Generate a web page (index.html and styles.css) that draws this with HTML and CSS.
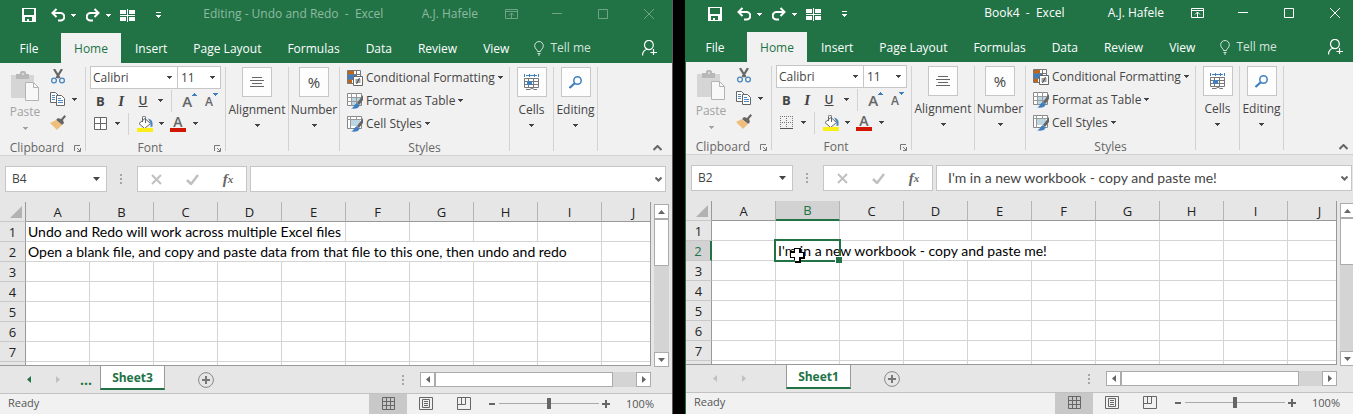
FILE: index.html
```html
<!DOCTYPE html>
<html lang="en">
<head>
<meta charset="utf-8">
<title>Excel workbooks</title>
<link rel="stylesheet" href="styles.css">
</head>
<body>
<svg class="sprite" aria-hidden="true">
  <symbol id="i-save" viewBox="0 0 14 14"><path fill="currentColor" fill-rule="evenodd" d="M0 0h14v14H0zM2 1v6h10V1zM3 9v4h2v-2h2v2h3V9z"/></symbol>
  <symbol id="i-undo" viewBox="0 0 14 14"><path fill="none" stroke="currentColor" stroke-width="2" d="M5.500 1L1.500 5l4 4M2 5h7a3.600 3.600 0 0 1 1 7.500H7"/></symbol>
  <symbol id="i-redo" viewBox="0 0 14 14"><path fill="none" stroke="currentColor" stroke-width="2" d="M8.500 1l4 4-4 4M12 5H5a3.600 3.600 0 0 0-1 7.500h3"/></symbol>
  <symbol id="i-panes" viewBox="0 0 15 13"><path fill="currentColor" shape-rendering="crispEdges" d="M0 1h6v4H0zM9 1h6v4H9zM0 8h6v4H0zM9 8h6v4H9zM0 6h15v1H0zM7 0h1v13H7z"/></symbol>
  <symbol id="i-more" viewBox="0 0 5 6"><path fill="currentColor" shape-rendering="crispEdges" d="M0 0h5v1H0zM0 3h5v1H0zM1 4h3v1H1zM2 5h1v1H2z"/></symbol>
  <symbol id="i-down" viewBox="0 0 5 3"><path fill="currentColor" shape-rendering="crispEdges" d="M0 0h5v1H0zM1 1h3v1H1zM2 2h1v1H2z"/></symbol>
  <symbol id="i-up" viewBox="0 0 5 3"><path fill="currentColor" shape-rendering="crispEdges" d="M0 2h5v1H0zM1 1h3v1H1zM2 0h1v1H2z"/></symbol>
  <symbol id="i-ribbon" viewBox="0 0 13 10"><path fill="none" stroke="currentColor" d="M.5.5h12v9H.5zM.5 2.500h12M6.500 9V4M4 6.500L6.500 4 9 6.500"/></symbol>
  <symbol id="i-min" viewBox="0 0 10 10"><path fill="currentColor" d="M0 4h10v1H0z"/></symbol>
  <symbol id="i-max" viewBox="0 0 10 10"><path fill="none" stroke="currentColor" d="M.5.5h9v9h-9z"/></symbol>
  <symbol id="i-close" viewBox="0 0 10 10"><path fill="none" stroke="currentColor" d="M0 0l10 10M10 0L0 10"/></symbol>
  <symbol id="i-bulb" viewBox="0 0 10 15"><path fill="none" stroke="currentColor" d="M3.500 10.500c0-2-2.800-2.500-2.800-5.700a4.300 4.300 0 0 1 8.600 0c0 3.200-2.800 3.700-2.800 5.700zM3.500 12.500h3M4 14h2"/></symbol>
  <symbol id="i-person" viewBox="0 0 15 16"><path fill="none" stroke="currentColor" stroke-width="1.200" d="M2.500 5a4.400 4.600 0 1 0 8.800 0a4.400 4.600 0 1 0-8.800 0M.5 15.500c0-4 2-5.500 4.500-6.500M11.500 9v6M8.500 12.500H15"/></symbol>
  <symbol id="i-paste" viewBox="0 0 28 30"><path fill="#d5d5d5" d="M0 4h23v7h-9v16H0z"/><path fill="#b8b8b8" d="M5 3h4V1.500A2 2 0 0 1 11 0h2a2 2 0 0 1 2 1.500V3h3v5H5z"/><path fill="#d9d9d9" d="M11 2h2v2h-2z"/><path fill="#f8f8f8" stroke="#b3b3b3" d="M14.500 11.500h8l5 5v13h-13z"/><path fill="none" stroke="#b3b3b3" d="M22.500 11.500v5h5"/></symbol>
  <symbol id="i-cut" viewBox="0 0 14 15"><path stroke="#666" stroke-width="2.200" fill="none" d="M3 0l5.500 9M11 0L5.500 9"/><circle cx="3" cy="11.500" r="2.400" fill="none" stroke="#4a86c0" stroke-width="1.300"/><circle cx="11" cy="11.500" r="2.400" fill="none" stroke="#4a86c0" stroke-width="1.300"/></symbol>
  <symbol id="i-copy" viewBox="0 0 15 14"><path fill="#fff" stroke="#666" d="M.5.5h5l3 3v7h-8z"/><path fill="#fff" stroke="#666" d="M6.500 3.500h5l3 3v7h-8z"/><path stroke="#4a86c0" d="M2 3.500h3M2 5.500h3M2 7.500h3M8 6.500h3M8 8.500h5M8 10.500h5"/></symbol>
  <symbol id="i-brush" viewBox="0 0 16 15"><path fill="#666" d="M8 3l3 1 3.500-4L16 1.500 13 5l1 3-2 2-6-5z"/><path fill="#f0be7c" d="M0 8l6-3 6 5-5 5z"/></symbol>
  <symbol id="i-borders-all" viewBox="0 0 14 14"><path fill="#fff" stroke="#666" d="M.5.5h12v12H.5zM6.500 0v13M0 6.500h13"/></symbol>
  <symbol id="i-borders-none" viewBox="0 0 14 14"><path fill="none" stroke="#777" stroke-dasharray="1 1" d="M0 .5h13M0 6.500h13M.5 0v13M6.500 0v13M12.500 0v13"/><path stroke="#555" d="M0 12.500h13"/></symbol>
  <symbol id="i-fill" viewBox="0 0 16 16"><path fill="#fff" stroke="#666" d="M8 2.500l5.500 5-6 5-5.500-5z"/><path fill="none" stroke="#666" d="M5.500 6V1.500a1.500 1.500 0 0 1 3 0V7"/><path fill="#4a86c0" d="M11 2.500c4 1 5 3 4.500 8l-2 .5V7z"/><path fill="#fbee16" d="M0 12h16v4H0z"/></symbol>
  <symbol id="i-cond" viewBox="0 0 16 16"><path fill="#fff" stroke="#777" d="M.5.5h13v13H.5zM4.500 0v13M9.500 0v13M0 4.500h13M0 9.500h13"/><path fill="#bf6518" d="M1 1h6v3H1zM1 10h4v3H1z"/><path fill="#3f7fc0" d="M1 5h8v4H1z"/><path fill="#fff" stroke="#666" d="M6.500 6.500h9v9h-9z"/><path stroke="#444" d="M8.500 10h5M8.500 12h5M12.500 8l-3 6"/></symbol>
  <symbol id="i-table" viewBox="0 0 16 16"><path fill="#fff" stroke="#888" d="M.5.5h14v12H.5z"/><path fill="#bcd5e3" d="M5 5h9v7H5z"/><path fill="none" stroke="#999" d="M0 4.500h14M0 8.500h14M4.500 0v13M9.500 0v13"/><path fill="#666" d="M16 2v5l-4 5-2-2z"/><path fill="#3f7fc0" d="M10 10l2.500 2.500c-.5 3-4 3.500-8.500 3 3-1 3-4 6-5.500z"/></symbol>
  <symbol id="i-styles" viewBox="0 0 16 16"><path fill="#fff" stroke="#888" d="M.5.5h14v12H.5z"/><path fill="none" stroke="#999" d="M0 3.500h14M3.500 0v13M9.500 0v3"/><path fill="#bcd5e3" d="M4 4h9v6H4z"/><path fill="#666" d="M16 2v5l-4 5-2-2z"/><path fill="#3f7fc0" d="M10 10l2.500 2.500c-.5 3-4 3.500-8.500 3 3-1 3-4 6-5.500z"/></symbol>
  <symbol id="i-align" viewBox="0 0 14 11"><path stroke="#666" d="M2 .5h10M0 3.500h14M2 6.500h10M0 9.500h14"/></symbol>
  <symbol id="i-cells" viewBox="0 0 16 16"><path stroke="#3f7fc0" fill="none" d="M.5 0v3M14.500 0v3M2 1.500h11M5.500 0v3M10.500 0v3"/><path fill="#fff" stroke="#777" d="M.5 4.500h14v9H.5zM4.500 4v10M9.500 4v10M0 7.500h15M0 10.500h15"/><path fill="#3f7fc0" d="M3 7h5v4H3z"/><path fill="none" stroke="#777" d="M2 15.500h4l2-1.500 2 1.500h3"/></symbol>
  <symbol id="i-find" viewBox="0 0 13 13"><circle cx="8.500" cy="4.500" r="3.700" fill="none" stroke="#3f7fc0" stroke-width="1.500"/><path stroke="#3f7fc0" stroke-width="2.200" d="M6 7L.5 12"/></symbol>
  <symbol id="i-launch" viewBox="0 0 7 7"><path fill="none" stroke="#777" d="M.5 6V.5H6M3 3l3 3M6.500 3v3.500H3"/></symbol>
  <symbol id="i-chev-up" viewBox="0 0 9 6"><path fill="none" stroke="#666" stroke-width="2" d="M.5 5l4-4 4 4"/></symbol>
  <symbol id="i-chev-down" viewBox="0 0 7 5"><path fill="none" stroke="#666" stroke-width="2" d="M.5.5l3 3 3-3"/></symbol>
  <symbol id="i-cancel" viewBox="0 0 11 11"><path stroke="#c0c0c0" stroke-width="2" d="M1 1l9 9M10 1l-9 9"/></symbol>
  <symbol id="i-ok" viewBox="0 0 13 11"><path fill="none" stroke="#c0c0c0" stroke-width="2.500" d="M1 6l4 4 7-9"/></symbol>
  <symbol id="i-dots" viewBox="0 0 2 10"><path fill="#a6a6a6" d="M0 0h2v2H0zM0 4h2v2H0zM0 8h2v2H0z"/></symbol>
  <symbol id="i-corner" viewBox="0 0 12 12"><path fill="#b2b2b2" d="M12 0v12H0z"/></symbol>
  <symbol id="i-up-arrow" viewBox="0 0 7 4"><path fill="currentColor" d="M0 4h7L3.500 0z"/></symbol>
  <symbol id="i-down-arrow" viewBox="0 0 7 4"><path fill="currentColor" d="M0 0h7L3.500 4z"/></symbol>
  <symbol id="i-left-arrow" viewBox="0 0 4 7"><path fill="currentColor" d="M4 0v7L0 3.500z"/></symbol>
  <symbol id="i-right-arrow" viewBox="0 0 4 7"><path fill="currentColor" d="M0 0v7l4-3.500z"/></symbol>
  <symbol id="i-add" viewBox="0 0 16 16"><circle cx="8" cy="8" r="7.400" fill="none" stroke="#888"/><path stroke="#777" stroke-width="2" d="M8 4v8M4 8h8"/></symbol>
  <symbol id="i-normal" viewBox="0 0 13 13"><path fill="none" stroke="#666" d="M.5.5h12v12H.5zM4.500 0v13M8.500 0v13M0 4.500h13M0 8.500h13"/></symbol>
  <symbol id="i-page" viewBox="0 0 14 13"><path fill="none" stroke="#666" d="M.5.5h13v12H.5zM3.500 2.500h7v8h-7zM5 4.500h4M5 6.500h4M5 8.500h4"/></symbol>
  <symbol id="i-break" viewBox="0 0 14 13"><path fill="none" stroke="#666" d="M.5.5h13v12H.5zM.5 7.500h8v-7M4.500 0v7"/></symbol>
  <symbol id="i-pointer" viewBox="0 0 16 16"><path fill="#000" d="M5 1h7v4h4v7h-4v4H6v-3H5v-2H1V4h4z"/><path fill="#fff" d="M6 2h4v4h4v4h-4v4H6v-4H2V6h4z"/></symbol>
</svg>
<main class="desktop" id="desktop"></main>
<script src="script.js"></script>
</body>
</html>
```
FILE: styles.css
```css
* { box-sizing: border-box; }

html, body { height: 100%; }

body {
  margin: 0;
  overflow: hidden;
  background: #000;
  color: #444;
  font: 12px/16px "Open Sans", "Noto Sans", sans-serif;
}

button, input, select {
  margin: 0;
  padding: 0;
  border: 0;
  border-radius: 0;
  background: none;
  color: inherit;
  font: inherit;
}

svg { display: block; flex: none; }
.sprite { position: absolute; width: 0; height: 0; }

.desktop {
  display: grid;
  grid-template-columns: 1fr 1fr;
  gap: 14px;
  width: calc(100% + 5px);
  height: 100%;
}

.window {
  display: flex;
  flex-direction: column;
  min-width: 0;
  background: #e6e6e6;
  box-shadow: 0 0 0 1px #217346;
}
.window.inactive { box-shadow: 1px 0 0 #5c5c5c; }
.window.active { margin-top: -1px; }

/* Title bar */
.titlebar {
  display: flex;
  align-items: center;
  height: 33px;
  padding-bottom: 5px;
  background: #217346;
  color: #fff;
}
.quick { display: flex; align-items: center; padding: 2px 0 0 18px; }
.quick button { display: flex; align-items: center; justify-content: center; width: 22px; height: 22px; }
.quick .drop { width: 13px; padding-right: 4px; }
.quick .undo { margin-left: 7px; }
.quick .split { width: 21px; }
.quick .customize { width: 41px; }
.title { flex: 1; margin: 0; padding-right: 14px; text-align: center; font-size: 12px; font-weight: 400; white-space: pre; }
.active .title { padding-left: 90px; }
.user { padding-right: 10px; }
.inactive .title, .inactive .user { color: #8fbaa1; }
.controls { display: flex; }
.controls button { display: flex; align-items: center; justify-content: center; width: 46px; height: 28px; }
.inactive .controls { color: #6fa486; }

/* Ribbon tabs */
.tabs { display: flex; height: 30px; padding-right: 15px; background: #217346; color: #fff; }
.tabs button { padding: 1px 13px 0; white-space: nowrap; }
.tabs .file { width: 61px; padding-right: 16px; }
.tabs .home { width: 60px; margin-right: 1px; padding: 1px 0 0; background: #f1f1f1; color: #217346; }
.tabs .tell { display: flex; align-items: center; gap: 6px; padding: 0 0 0 12px; color: #d3e3da; }
.tabs .share { margin-left: auto; padding: 0; color: #fff; }

/* Ribbon */
.ribbon { display: flex; height: 93px; padding: 4px 0; background: #f1f1f1; border-bottom: 1px solid #d2d2d2; }
.group { display: flex; flex-direction: column; height: 84px; border-right: 1px solid #d2d2d2; }
.group-body { flex: 1; display: flex; }
.caption { display: flex; align-items: center; justify-content: center; height: 16px; margin-bottom: -5px; color: #666; }
.caption span { flex: 1; text-align: center; }
.clipboard { width: 86px; }
.clipboard .caption, .font .caption { padding-right: 4px; }
.font { width: 140px; }
.styles { width: 170px; }

.paste { display: flex; flex-direction: column; align-items: center; width: 50px; padding-top: 4px; color: #a3a3a3; }
.paste span { margin: 3px 0 7px; }
.clip-tools { display: flex; flex-direction: column; gap: 7px; padding-top: 1px; }
.clip-tools button { display: flex; align-items: center; gap: 7px; height: 16px; }

.font .group-body { flex-direction: column; margin-top: -1px; padding: 0 4px; }
.font-pick { display: flex; }
.combo { display: flex; align-items: center; height: 23px; padding: 0 5px; background: #fff; border: 1px solid #c6c6c6; }
.combo select { flex: 1; min-width: 0; appearance: none; }
.combo.family { width: 88px; padding-left: 2px; }
.combo.size { width: 44px; margin-left: -1px; padding-left: 3px; }
.tools { display: flex; align-items: center; height: 23px; }
.tools button { display: flex; align-items: center; justify-content: center; width: 21px; height: 22px; }
.tools button.narrow, .tools .drop { width: 12px; }
.tools .under { width: 23px; }
.rule { width: 1px; height: 22px; margin: 0 5px; background: #d2d2d2; }
.tools .bold { font-weight: 700; font-size: 13px; }
.italic { font-family: "Liberation Serif", serif; font-style: italic; font-weight: 700; font-size: 15px; }
.under { text-decoration: underline; font-weight: 600; }
.tools .grow, .tools .shrink { align-items: flex-start; width: 22px; padding-left: 3px; color: #666; font-weight: 600; }
.tools .grow { font-size: 15px; line-height: 22px; }
.tools .shrink { font-size: 12px; line-height: 24px; }
.grow svg, .shrink svg { margin-top: 3px; color: #3f7fc0; }
.tools .ink { flex-direction: column; width: 22px; color: #666; font-weight: 600; font-size: 14px; line-height: 12px; }
.ink i { width: 16px; height: 4px; background: #d21400; }
.tools .bucket { width: 21px; }

.tall { display: flex; flex-direction: column; align-items: center; height: 84px; }
.ribbon .tall { border-right: 1px solid #d2d2d2; }
.tile { display: flex; align-items: center; justify-content: center; width: 30px; height: 30px; background: #fdfdfd; border: 1px solid #c6c6c6; font-size: 15px; }
.tall span { margin: 5px 0 6px; white-space: nowrap; }
.alignment { width: 63px; }
.number { width: 51px; }
.cells, .editing { width: 44px; }

.style-list { flex: 1; display: flex; flex-direction: column; padding: 2px 0 0 7px; }
.style-list button { display: flex; align-items: center; gap: 3px; height: 23px; padding-bottom: 6px; white-space: nowrap; }
.collapse { align-self: flex-end; margin: 0 10px 0 auto; }

/* Formula bar */
.formula-bar { display: flex; height: 46px; padding: 10px 6px 10px 5px; }
.box { display: flex; align-items: center; background: #fff; border: 1px solid #c6c6c6; }
.name-box { width: 102px; padding: 0 6px; }
.name-box input { flex: 1; min-width: 0; }
.handle { align-self: center; margin: 0 15px 0 13px; }
.entry-tools { width: 110px; margin-right: 3px; padding: 0 8px; justify-content: space-between; }
.entry-tools button { display: flex; align-items: center; justify-content: center; width: 20px; height: 22px; }
.fx { font: italic 700 15px/20px "Liberation Serif", serif; color: #666; }
.fx small { font-size: 11px; }
.formula { flex: 1; padding: 0 3px 0 11px; }
.formula input { flex: 1; min-width: 0; font: 14px/20px Lato, sans-serif; }

/* Worksheet */
.sheet { display: flex; }
.grid { flex: 1; table-layout: fixed; width: 0; border-spacing: 0; border-right: 1px solid #999; border-bottom: 1px solid #999; }
.grid th, .grid td { height: 20px; padding: 0; white-space: nowrap; }
.grid th { color: #222; font: 13px/18px "Open Sans", sans-serif; border-bottom: 1px solid #c8c8c8; }
.grid thead th { border-bottom-color: #999; border-right: 1px solid #b4b4b4; }
.grid thead th:last-child { border-right: 0; padding-left: 15px; }
.grid tbody th { border-right: 1px solid #999; }
.grid thead .picked { background: #d2d2d2; color: #217346; border-bottom: 2px solid #217346; }
.grid tbody .picked { background: #d2d2d2; color: #217346; border-right: 2px solid #217346; }
.grid td { padding-left: 2px; background: #fff; border-right: 1px solid #d4d4d4; border-bottom: 1px solid #d4d4d4; color: #000; font: 14px/18px Lato, sans-serif; }
.grid td:last-child { border-right: 0; }
.grid .cut th, .grid .cut td { height: 3px; border-bottom: 0; }
.grid .corner { border-right: 1px solid #999; border-bottom-color: #c8c8c8; }
.corner svg { margin-left: 10px; }
.row-head { width: 26px; }
.col { width: 64px; }
.grid .selected { position: relative; }
.outline { position: absolute; left: -2px; top: -2px; width: 67px; height: 23px; border: 2px solid #217346; }
.outline::after { content: ""; position: absolute; right: -3px; bottom: -3px; width: 6px; height: 6px; background: #217346; border: 1px solid #fff; border-width: 1px 0 0 1px; }
.pointer { position: absolute; left: 13px; top: 6px; }

.sheet-side { display: flex; width: 21px; }
.vscroll { display: flex; flex-direction: column; width: 15px; margin: 2px 3px -1px; background: #d4d4d4; color: #666; }
.vscroll button, .hscroll button { display: flex; align-items: center; justify-content: center; width: 15px; height: 15px; background: #fff; border: 1px solid #ababab; }
.vscroll .thumb { height: 47px; margin-bottom: auto; }

/* Sheet tabs */
.sheet-bar { display: flex; align-items: center; height: 27px; padding-right: 21px; }
.nav { display: flex; align-items: center; width: 100px; padding-left: 27px; color: #217346; }
.nav .next { margin-left: 25px; color: #c0c0c0; }
.nav .more { margin-left: 20px; font-weight: 700; font-size: 14px; }
.active .nav .prev { color: #c0c0c0; }
.sheet-tab { align-self: flex-start; width: 65px; height: 24px; padding-top: 1px; border: 1px solid #999; border-top: 0; border-bottom: 2px solid #217346; color: #217346; font-weight: 700; }
.sheet-bar .sheet-tab { background: #fff; }
.add { margin-left: 33px; }
.hscroll-wrap { display: flex; align-items: center; gap: 16px; margin-left: auto; }
.hscroll { display: flex; width: 231px; background: #d4d4d4; color: #666; }
.hscroll .thumb { width: 178px; margin-right: auto; }

/* Status bar */
.status { flex: 1; display: flex; padding: 0 18px 0 8px; background: #f1f1f1; border-top: 1px solid #c2c2c2; color: #555; font-size: 11px; }
.status .ready { padding-top: 1px; }
.views { display: flex; margin-left: auto; }
.views button { display: flex; justify-content: center; width: 38px; padding-top: 3px; }
.views .on { background: #c8c8c8; }
.zoom { display: flex; align-items: center; gap: 3px; height: 19px; margin-left: 5px; }
.zoom button { width: 8px; height: 8px; display: grid; place-items: center; }
.zoom button::before { content: ""; grid-area: 1 / 1; width: 8px; height: 2px; background: #666; }
.zoom .out::before { width: 6px; }
.zoom .in::after { content: ""; grid-area: 1 / 1; width: 2px; height: 8px; background: #666; }
.zoom input { width: 100px; height: 12px; appearance: none; background: linear-gradient(#aaa, #aaa) center / 100% 1px no-repeat; }
.zoom input::-webkit-slider-thumb { appearance: none; width: 4px; height: 11px; background: #666; }
.zoom output { width: 35px; margin-left: 6px; text-align: right; }
```
FILE: script.js
```javascript
const icon = (id, w, h) => `<svg width="${w}" height="${h}" aria-hidden="true"><use href="#i-${id}"/></svg>`;
const drop = (label) => `<button class="drop" aria-label="${label}">${icon("down", 5, 3)}</button>`;
const columns = ["A", "B", "C", "D", "E", "F", "G", "H", "I", "J"];

const books = [
  {
    state: "inactive", title: "Editing - Undo and Redo  -  Excel", cell: "B4", formula: "",
    borders: "borders-all", sheet: "Sheet3", more: "...", selected: null,
    cells: { 1: { at: 0, span: 5, text: "Undo and Redo will work across multiple Excel files" },
             2: { at: 0, span: 9, text: "Open a blank file, and copy and paste data from that file to this one, then undo and redo" } }
  },
  {
    state: "active", title: "Book4  -  Excel", cell: "B2", formula: "I'm in a new workbook - copy and paste me!",
    borders: "borders-none", sheet: "Sheet1", more: "", selected: { col: 1, row: 2 },
    cells: { 2: { at: 1, span: 5, text: "I'm in a new workbook - copy and paste me!" } }
  }
];

function row(book, n) {
  const entry = book.cells[n];
  let html = "";
  for (let c = 0; c < columns.length; c++) {
    if (entry && entry.at === c) {
      const chosen = book.selected && book.selected.row === n;
      html += `<td colspan="${entry.span}"${chosen ? ' class="selected"' : ""}>${entry.text}` +
        (chosen ? `<div class="outline"></div><div class="pointer">${icon("pointer", 16, 16)}</div>` : "") + "</td>";
      c += entry.span - 1;
    } else {
      html += "<td></td>";
    }
  }
  const picked = book.selected && book.selected.row === n ? ' class="picked"' : "";
  return `<tr><th scope="row"${picked}>${n}</th>${html}</tr>`;
}

function tall(name, content) {
  return `<button class="tall ${name.toLowerCase()}"><div class="tile">${content}</div><span>${name}</span>${icon("down", 5, 3)}</button>`;
}

function render(book, i) {
  const heads = columns.map((c, k) =>
    `<th scope="col"${book.selected && book.selected.col === k ? ' class="picked"' : ""}>${c}</th>`).join("");
  return `
<section class="window ${book.state}" aria-label="${book.title}">
  <header class="titlebar">
    <div class="quick">
      <button aria-label="Save">${icon("save", 14, 14)}</button>
      <button class="undo" aria-label="Undo">${icon("undo", 14, 14)}</button>${drop("Undo list")}
      <button aria-label="Redo">${icon("redo", 14, 14)}</button>${drop("Redo list")}
      <button class="split" aria-label="Split">${icon("panes", 15, 13)}</button>
      <button class="customize" aria-label="Customize">${icon("more", 5, 6)}</button>
    </div>
    <h1 class="title">${book.title}</h1>
    <div class="user">A.J. Hafele</div>
    <div class="controls">
      <button aria-label="Ribbon display options">${icon("ribbon", 13, 10)}</button>
      <button aria-label="Minimize">${icon("min", 10, 10)}</button>
      <button aria-label="Maximize">${icon("max", 10, 10)}</button>
      <button aria-label="Close">${icon("close", 10, 10)}</button>
    </div>
  </header>
  <nav class="tabs">
    <button class="file">File</button><button class="home">Home</button><button>Insert</button><button>Page Layout</button><button>Formulas</button><button>Data</button><button>Review</button><button>View</button>
    <button class="tell">${icon("bulb", 10, 15)}Tell me</button>
    <button class="share" aria-label="Share">${icon("person", 15, 16)}</button>
  </nav>
  <div class="ribbon">
    <div class="group clipboard">
      <div class="group-body">
        <button class="paste" disabled>${icon("paste", 28, 30)}<span>Paste</span>${icon("down", 5, 3)}</button>
        <div class="clip-tools">
          <button aria-label="Cut">${icon("cut", 16, 15)}</button>
          <button aria-label="Copy">${icon("copy", 15, 14)}${icon("down", 5, 3)}</button>
          <button aria-label="Format painter">${icon("brush", 16, 15)}</button>
        </div>
      </div>
      <div class="caption"><span>Clipboard</span>${icon("launch", 7, 7)}</div>
    </div>
    <div class="group font">
      <div class="group-body">
        <div class="font-pick">
          <div class="combo family"><select aria-label="Font"><option>Calibri</option></select>${icon("down", 5, 3)}</div>
          <div class="combo size"><select aria-label="Font size"><option>11</option></select>${icon("down", 5, 3)}</div>
        </div>
        <div class="tools">
          <button class="bold">B</button><button class="italic">I</button><button class="under">U</button>${drop("Underline styles")}<div class="rule"></div>
          <button class="grow" aria-label="Increase font size">A${icon("up", 5, 3)}</button><button class="shrink" aria-label="Decrease font size">A${icon("down", 5, 3)}</button>
        </div>
        <div class="tools">
          <button aria-label="Borders">${icon(book.borders, 14, 14)}</button>${drop("Border styles")}<div class="rule"></div>
          <button class="bucket" aria-label="Fill color">${icon("fill", 16, 16)}</button>${drop("Fill colors")}
          <button class="ink" aria-label="Font color">A<i></i></button>${drop("Font colors")}
        </div>
      </div>
      <div class="caption"><span>Font</span>${icon("launch", 7, 7)}</div>
    </div>
    ${tall("Alignment", icon("align", 14, 11))}
    ${tall("Number", "%")}
    <div class="group styles">
      <div class="style-list">
        <button>${icon("cond", 16, 16)}Conditional Formatting${icon("down", 5, 3)}</button>
        <button>${icon("table", 16, 16)}Format as Table${icon("down", 5, 3)}</button>
        <button>${icon("styles", 16, 16)}Cell Styles${icon("down", 5, 3)}</button>
      </div>
      <div class="caption"><span>Styles</span></div>
    </div>
    ${tall("Cells", icon("cells", 16, 16))}
    ${tall("Editing", icon("find", 13, 13))}
    <button class="collapse" aria-label="Collapse ribbon">${icon("chev-up", 9, 6)}</button>
  </div>
  <div class="formula-bar">
    <div class="box name-box"><input aria-label="Name box" value="${book.cell}">${icon("down-arrow", 7, 4)}</div>
    <div class="handle">${icon("dots", 2, 10)}</div>
    <div class="box entry-tools">
      <button aria-label="Cancel">${icon("cancel", 11, 11)}</button>
      <button aria-label="Enter">${icon("ok", 13, 11)}</button>
      <button class="fx" aria-label="Insert function">f<small>x</small></button>
    </div>
    <div class="box formula"><input aria-label="Formula" value="${book.formula}">${icon("chev-down", 7, 5)}</div>
  </div>
  <div class="sheet">
    <table class="grid">
      <colgroup><col class="row-head">${'<col class="col">'.repeat(9)}<col></colgroup>
      <thead><tr><th class="corner">${icon("corner", 12, 12)}</th>${heads}</tr></thead>
      <tbody>${[1, 2, 3, 4, 5, 6, 7].map((n) => row(book, n)).join("")}
        <tr class="cut"><th></th>${"<td></td>".repeat(10)}</tr>
      </tbody>
    </table>
    <div class="sheet-side"><div class="vscroll">
      <button aria-label="Scroll up">${icon("up-arrow", 7, 4)}</button>
      <button class="thumb" aria-label="Vertical position"></button>
      <button aria-label="Scroll down">${icon("down-arrow", 7, 4)}</button>
    </div></div>
  </div>
  <div class="sheet-bar">
    <div class="nav">
      <button class="prev" aria-label="Previous sheet">${icon("left-arrow", 4, 7)}</button>
      <button class="next" aria-label="Next sheet">${icon("right-arrow", 4, 7)}</button>
      <button class="more" aria-label="More sheets">${book.more}</button>
    </div>
    <button class="sheet-tab">${book.sheet}</button>
    <button class="add" aria-label="New sheet">${icon("add", 16, 16)}</button>
    <div class="hscroll-wrap">${icon("dots", 2, 10)}
      <div class="hscroll">
        <button aria-label="Scroll left">${icon("left-arrow", 4, 7)}</button>
        <button class="thumb" aria-label="Horizontal position"></button>
        <button aria-label="Scroll right">${icon("right-arrow", 4, 7)}</button>
      </div>
    </div>
  </div>
  <footer class="status">
    <span class="ready">Ready</span>
    <div class="views">
      <button class="on" aria-label="Normal view">${icon("normal", 13, 13)}</button>
      <button aria-label="Page layout view">${icon("page", 14, 13)}</button>
      <button aria-label="Page break view">${icon("break", 14, 13)}</button>
    </div>
    <div class="zoom">
      <button class="out" aria-label="Zoom out"></button>
      <input type="range" min="0" max="200" value="100" aria-label="Zoom" id="zoom-${i}">
      <button class="in" aria-label="Zoom in"></button>
      <output for="zoom-${i}">100%</output>
    </div>
  </footer>
</section>`;
}

document.getElementById("desktop").innerHTML = books.map(render).join("");
```
